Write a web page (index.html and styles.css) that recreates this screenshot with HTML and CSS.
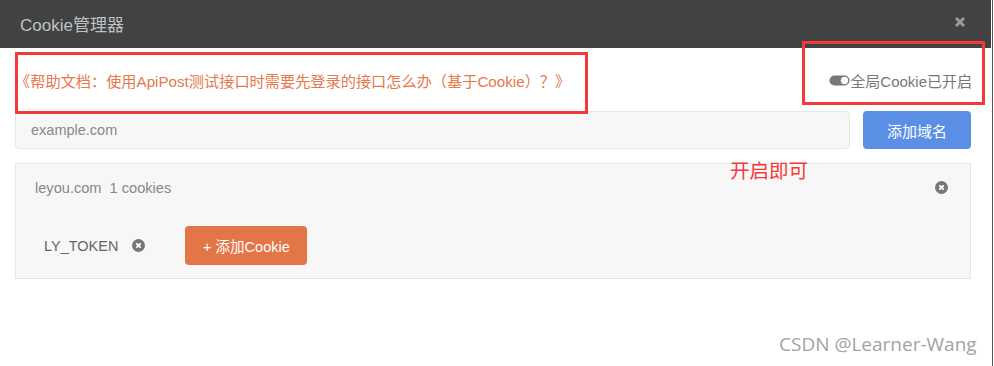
FILE: index.html
```html
<!DOCTYPE html>
<html lang="zh">
<head>
<meta charset="utf-8">
<title>Cookie管理器</title>
<link rel="stylesheet" href="styles.css">
</head>
<body>
<div class="page">
  <div class="modal">
    <div class="modal-header">
      <span class="modal-title">Cookie管理器</span>
      <svg class="close" width="12" height="12" viewBox="0 0 12 12"><path d="M2 2L10 10M10 2L2 10" stroke="#9b9b9b" stroke-width="3" stroke-linecap="butt"/></svg>
    </div>
    <div class="modal-body">
      <div class="help-row">
        <a class="help-link">《帮助文档：使用ApiPost测试接口时需要先登录的接口怎么办（基于Cookie）？》</a>
        <span class="global-toggle">
          <svg class="toggle" width="21" height="11" viewBox="0 0 21 11"><rect x="0.5" y="0.5" width="20" height="10" rx="5" fill="#777"/><circle cx="15.5" cy="5.5" r="4.2" fill="#fff" stroke="#777" stroke-width="1"/></svg>全局Cookie已开启
        </span>
      </div>
      <div class="domain-row">
        <div class="domain-input">example.com</div>
        <button class="btn btn-blue">添加域名</button>
      </div>
      <div class="domain-panel">
        <div class="panel-head">
          <span class="domain-name">leyou.com&nbsp; 1 cookies</span>
          <svg class="xcircle" width="13" height="13" viewBox="0 0 13 13"><circle cx="6.5" cy="6.5" r="6.5" fill="#777"/><path d="M4.3 4.3L8.7 8.7M8.7 4.3L4.3 8.7" stroke="#fff" stroke-width="1.8"/></svg>
        </div>
        <div class="cookie-row">
          <span class="cookie-name">LY_TOKEN</span>
          <svg class="xcircle" width="13" height="13" viewBox="0 0 13 13"><circle cx="6.5" cy="6.5" r="6.5" fill="#777"/><path d="M4.3 4.3L8.7 8.7M8.7 4.3L4.3 8.7" stroke="#fff" stroke-width="1.8"/></svg>
          <button class="btn btn-orange">+ 添加Cookie</button>
        </div>
      </div>
    </div>
  </div>
  <div class="mark mark-help"></div>
  <div class="mark mark-toggle"></div>
  <div class="note">开启即可</div>
  <div class="watermark">CSDN @Learner-Wang</div>
</div>
</body>
</html>
```
FILE: styles.css
```css
html, body {
  margin: 0;
  padding: 0;
  background: #fff;
}
body {
  font-family: "Liberation Sans", Arial, "Noto Sans CJK SC", sans-serif;
}
.page {
  position: relative;
  width: 993px;
  height: 366px;
  border-right: 1px solid #555;
  box-sizing: border-box;
  overflow: hidden;
}
.modal {
  width: 991px;
}
.modal-header {
  height: 48px;
  background: #424242;
  display: flex;
  align-items: center;
  justify-content: space-between;
  padding: 0 25px 0 20px;
  box-sizing: border-box;
}
.modal-title {
  color: #bec2c6;
  font-size: 17px;
  margin-top: -2px;
}
.close {
  display: block;
  margin-top: -4px;
}
.modal-body {
  padding: 0 20px 0 15px;
}
.help-row {
  height: 63px;
  display: flex;
  align-items: center;
  justify-content: space-between;
}
.help-link {
  color: #e5784d;
  font-size: 15.2px;
  margin-top: 1px;
}
.global-toggle {
  display: flex;
  align-items: center;
  color: #777;
  font-size: 15px;
  margin-right: -1px;
  margin-top: 1px;
}
.toggle {
  display: block;
}
.domain-row {
  display: flex;
  gap: 13px;
  height: 38px;
}
.domain-input {
  flex: 1;
  background: #f7f7f7;
  border: 1px solid #e6e6e6;
  border-radius: 4px;
  box-sizing: border-box;
  color: #888;
  font-size: 14.5px;
  display: flex;
  align-items: center;
  padding-left: 15px;
}
.btn {
  border: none;
  border-radius: 4px;
  color: #fff;
  font-family: inherit;
  font-size: 14.5px;
  padding: 0;
  cursor: pointer;
}
.btn-blue {
  width: 108px;
  background: #5b8fe6;
  font-size: 15px;
}
.domain-panel {
  margin-top: 14px;
  background: #f7f7f7;
  border: 1px solid #e6e6e6;
  height: 116px;
  box-sizing: border-box;
}
.panel-head {
  height: 47px;
  display: flex;
  align-items: center;
  justify-content: space-between;
  padding: 0 22px 0 19px;
}
.domain-name {
  color: #888;
  font-size: 14.6px;
}
.xcircle {
  display: block;
}
.cookie-row {
  display: flex;
  align-items: center;
  padding: 15px 0 0 28px;
}
.cookie-name {
  color: #666;
  font-size: 14.5px;
  margin-right: 14px;
}
.btn-orange {
  margin-left: 40px;
  width: 122px;
  height: 39px;
  background: #e37547;
}
.mark {
  position: absolute;
  border: 3px solid #f23a3a;
  box-sizing: border-box;
}
.mark-help {
  left: 15px;
  top: 52px;
  width: 573px;
  height: 62px;
}
.mark-toggle {
  left: 802px;
  top: 41px;
  width: 183px;
  height: 64px;
}
.note {
  position: absolute;
  left: 730px;
  top: 158px;
  color: #f23a3a;
  font-size: 19.5px;
  font-family: "Noto Sans CJK SC", sans-serif;
  line-height: 24px;
}
.watermark {
  position: absolute;
  left: 779px;
  top: 332px;
  color: #a3a3a3;
  font-family: "Open Sans", sans-serif;
  font-size: 19px;
  line-height: 24px;
}
```
